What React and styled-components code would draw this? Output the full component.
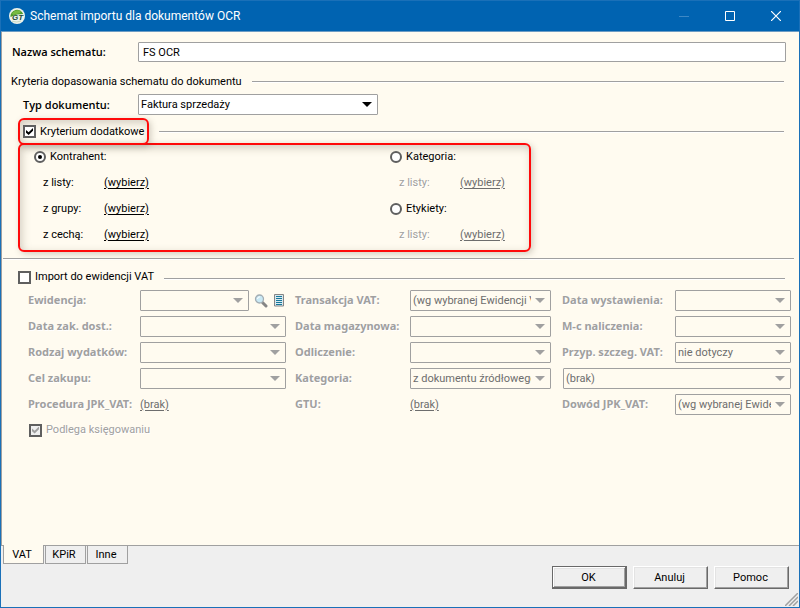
import React, { useState } from 'react';
import styled, { createGlobalStyle } from 'styled-components';

const GlobalStyle = createGlobalStyle`
	* {
		box-sizing: border-box;
	}

	body {
		margin: 0;
		background-color: #fffbf0;
		color: #000;
		font-family: Roboto, 'Open Sans', sans-serif;
		font-size: 11px;
		line-height: 16px;
	}

	input,
	select,
	button {
		margin: 0;
		font: inherit;
		color: inherit;
	}
`;

const Window = styled.div`
	display: flex;
	flex-direction: column;
	min-height: 100vh;
	border: 1px solid #1a70b8;
`;

const TitleBar = styled.header`
	display: flex;
	align-items: center;
	height: 31px;
	padding-left: 8px;
	background-color: #0063b1;
	border-bottom: 1px solid #6c9cc4;
	color: #fff;
`;

const Title = styled.h1`
	flex: 1;
	margin: 0 0 0 5px;
	font-size: 12px;
	font-weight: 400;
`;

const CaptionButton = styled.button`
	display: flex;
	align-items: center;
	justify-content: center;
	width: 46px;
	height: 29px;
	padding: 0;
	border: 0;
	background-color: transparent;
`;

const Page = styled.main`
	flex: 1;
	padding-top: 10px;
	border-left: 1px solid #a0a0a0;
	border-bottom: 1px solid #a0a0a0;
`;

const Row = styled.div`
	display: flex;
	align-items: center;
	padding: 0 13px 0 ${(props) => props.$indent || 10}px;
`;

const LegendRow = styled.div`
	display: flex;
	align-items: center;
	padding: 12px 15px 4px 9px;
`;

const ToggleRow = styled.div`
	display: flex;
	align-items: center;
	margin-top: 3px;
	padding: 0 15px 0 16px;
`;

const ImportRow = styled.div`
	display: flex;
	align-items: center;
	padding: 9px 14px 1px 16px;
`;

const FieldLabel = styled.label`
	width: ${(props) => props.$width}px;
	font-family: 'Open Sans', sans-serif;
	font-weight: 600;
`;

const TextInput = styled.input`
	flex: 1;
	min-width: 0;
	height: 20px;
	padding: 0 4px;
	border: 1px solid #a0a0a0;
	border-radius: 1px;
	background-color: #fff;
`;

const Legend = styled.h2`
	margin: 0;
	font-size: 11px;
	font-weight: 400;
`;

const Rule = styled.div`
	flex: 1;
	height: 2px;
	margin: ${(props) => (props.$low ? 4 : 0)}px 0 0 ${(props) => props.$gap}px;
	background-color: #a0a0a0;
	border-bottom: 1px solid #fff;
`;

const Divider = styled.hr`
	height: 2px;
	margin: 6px 5px 0 1px;
	border: 0;
	border-bottom: 1px solid #fff;
	background-color: #a0a0a0;
`;

const SelectBox = styled.div`
	position: relative;
	width: ${(props) => props.$width || '100%'};
	min-width: 0;
	color: ${(props) => (props.$disabled ? '#a0a0a0' : '#000')};

	svg {
		position: absolute;
		top: 8px;
		right: 6px;
		pointer-events: none;
	}
`;

const StyledSelect = styled.select`
	display: block;
	appearance: none;
	width: 100%;
	height: 21px;
	padding: 1px 19px 0 2px;
	border: 1px solid #a0a0a0;
	border-radius: 1px;
	background-color: #fff;
	color: #000;

	&:disabled {
		background-color: transparent;
		color: #6d6d6d;
		opacity: 1;
	}
`;

const CheckLabel = styled.label`
	display: inline-flex;
	align-items: center;
	gap: 4px;
	color: ${(props) => (props.$disabled ? '#a0a0a0' : '#000')};
	text-shadow: ${(props) => (props.$disabled ? '1px 1px #fff' : 'none')};
`;

const CheckInput = styled.input`
	appearance: none;
	display: flex;
	width: 13px;
	height: 13px;
	border: 2px solid #5f5f5f;
	background-color: #fff;

	&:checked::before {
		content: '';
		width: 7px;
		height: 7px;
		margin: 1px;
		background-color: ${(props) => (props.disabled ? '#a0a0a0' : '#000')};
		clip-path: polygon(0 30%, 38% 62%, 100% 0, 100% 38%, 38% 100%, 0 68%);
	}

	&:disabled {
		background-color: #efefef;
	}
`;

const RadioInput = styled.input`
	appearance: none;
	display: flex;
	align-items: center;
	justify-content: center;
	width: 12px;
	height: 12px;
	border: 2px solid #5f5f5f;
	border-radius: 50%;
	background-color: #fff;

	&:checked::before {
		content: '';
		width: 4px;
		height: 4px;
		border-radius: 50%;
		background-color: #000;
	}
`;

const Highlight = styled.div`
	border: 2px solid #ff0a0a;
	border-radius: 6px;
	box-shadow: 2px 2px 6px rgba(80, 70, 50, 0.25), inset 2px 3px 8px rgba(80, 70, 50, 0.25);
`;

const ToggleHighlight = styled(Highlight)`
	display: flex;
	align-items: center;
	height: 27px;
	padding: 0 3px 0 3px;
`;

const CriteriaHighlight = styled(Highlight)`
	display: flex;
	width: 64%;
	min-width: 513px;
	height: 109px;
	margin: -2px 0 0 16px;
	padding-left: 14px;
`;

const CriteriaColumn = styled.div`
	width: ${(props) => props.$width}px;
	margin-top: -1px;
`;

const CriteriaRow = styled.div`
	display: flex;
	align-items: center;
	height: 26px;
	padding-left: ${(props) => props.$indent || 0}px;
`;

const CriteriaName = styled.span`
	width: 61px;
	color: ${(props) => (props.$disabled ? '#a0a0a0' : '#000')};
	text-shadow: ${(props) => (props.$disabled ? '1px 1px #fff' : 'none')};
`;

const PickLink = styled.a`
	color: ${(props) => (props.$disabled ? '#6d6d6d' : '#000')};
	text-decoration: underline;
	text-underline-offset: 2px;
`;

const VatGrid = styled.div`
	display: grid;
	grid-template-columns:
		112px minmax(0, 146fr) 124px minmax(0, 141fr)
		124px minmax(0, 116fr);
	grid-auto-rows: 26px;
	align-items: start;
	padding: 4px 8px 0 26px;
`;

const VatLabel = styled.label`
	padding: 2px 0 0 ${(props) => props.$indent || 0}px;
	color: #a0a0a0;
	font-family: 'Noto Sans', sans-serif;
	font-weight: 700;
	text-shadow: 1px 1px #fff;
	white-space: nowrap;
`;

const VatValue = styled.div`
	display: flex;
	align-items: center;
	height: 21px;
	min-width: 0;
`;

const WideValue = styled.div`
	grid-column: span 2;
	padding-left: 12px;
`;

const PostingRow = styled.div`
	padding: 2px 0 0 27px;
`;

const IconButton = styled.button`
	display: flex;
	flex: none;
	margin: 0 1px 0 5px;
	padding: 0;
	border: 0;
	background-color: transparent;
`;

const Footer = styled.footer`
	position: relative;
	display: flex;
	justify-content: space-between;
	height: 61px;
	padding: 0 10px 0 2px;
	background-color: #efefef;
`;

const TabList = styled.div`
	display: flex;
	gap: 1px;
	height: 18px;
`;

const Tab = styled.button`
	width: 41px;
	height: ${(props) => (props.$active ? 19 : 18)}px;
	margin-top: ${(props) => (props.$active ? -1 : 0)}px;
	padding: ${(props) => (props.$active ? 1 : 0)}px 3px 0 0;
	border: 1px solid #a0a0a0;
	border-top: 0;
	background-color: ${(props) => (props.$active ? '#fffbf0' : '#efefef')};
`;

const Actions = styled.div`
	display: flex;
	gap: 6px;
	padding-top: 20px;
`;

const ActionButton = styled.button`
	width: 75px;
	height: 23px;
	padding: 0 2px 0 0;
	border: 1px solid;
	border-color: ${(props) => (props.$primary ? '#696969' : '#fff #696969 #696969 #fff')};
	background-color: #efefef;
	box-shadow: ${(props) =>
		props.$primary
			? 'inset -1px -1px #696969, inset 1px 1px #fff, inset -2px -2px #a0a0a0, inset 2px 2px #e3e3e3'
			: 'inset -1px -1px #a0a0a0, inset 1px 1px #e3e3e3'};
`;

const Grip = styled.svg`
	position: absolute;
	right: 1px;
	bottom: 1px;
`;

const Logo = () => (
	<svg width="16" height="16" viewBox="0 0 16 16" aria-hidden="true">
		<circle cx="8" cy="8" r="8" fill="#eef3ec" />
		<path d="M1.5 9A6.6 6.6 0 0 1 14.2 6L8 6.5 4 8z" fill="#4e9c2b" />
		<path d="M3 5Q7 1 12 3L11 5 4 7z" fill="#78ba43" />
		<text x="3" y="12" fill="#214c38" fontFamily="Liberation Sans" fontSize="8" fontStyle="italic" fontWeight="700">
			GT
		</text>
		<path d="M3 13.2Q8 15 12 13" stroke="#c5d8c3" fill="none" />
	</svg>
);

const SearchIcon = () => (
	<svg width="14" height="14" viewBox="0 0 14 14" aria-hidden="true">
		<path d="M8.5 8.5L12 12" stroke="#858585" strokeWidth="3" strokeLinecap="round" />
		<circle cx="5.5" cy="5" r="4" fill="#c9e9f5" stroke="#a3adb3" strokeWidth="1.3" />
		<path d="M3.5 5Q3.5 3 6 2.8" stroke="#fff" fill="none" />
	</svg>
);

const ListIcon = () => (
	<svg width="11" height="13" viewBox="0 0 11 13" aria-hidden="true">
		<path d="M.5.5h9v11.5h-9z" fill="#d8e8ee" stroke="#858585" />
		<path d="M2 2.5h6M2 4.5h6M2 6.5h6M2 8.5h6M2 10.5h6" stroke="#16789b" />
	</svg>
);

const Select = ({ id, label, value = '', disabled, width }) => (
	<SelectBox $disabled={disabled} $width={width}>
		<StyledSelect id={id} aria-label={label} defaultValue={value} disabled={disabled}>
			<option value={value}>{value}</option>
		</StyledSelect>
		<svg width="10" height="6" viewBox="0 0 10 6" aria-hidden="true">
			<path d="M0 0h10L5 5z" fill="currentColor" />
		</svg>
	</SelectBox>
);

const VatSelect = ({ id, name, value, indent }) => (
	<>
		<VatLabel htmlFor={id} $indent={indent}>
			{name}
		</VatLabel>
		<Select id={id} value={value} disabled />
	</>
);

const VatLink = ({ id, name, indent }) => (
	<>
		<VatLabel as="span" id={id} $indent={indent}>
			{name}
		</VatLabel>
		<VatValue>
			<PickLink href="#" $disabled aria-describedby={id}>
				(brak)
			</PickLink>
		</VatValue>
	</>
);

const Criteria = ({ name, disabled }) => (
	<CriteriaRow $indent={9}>
		<CriteriaName $disabled={disabled}>{name}</CriteriaName>
		<PickLink href="#" $disabled={disabled}>
			(wybierz)
		</PickLink>
	</CriteriaRow>
);

const tabs = ['VAT', 'KPiR', 'Inne'];

const App = () => {
	const [criterion, setCriterion] = useState('kontrahent');
	const [activeTab, setActiveTab] = useState('VAT');

	const radio = (value, text) => (
		<CriteriaRow>
			<CheckLabel>
				<RadioInput
					type="radio"
					name="criterion"
					checked={criterion === value}
					onChange={() => setCriterion(value)}
				/>
				{text}
			</CheckLabel>
		</CriteriaRow>
	);

	return (
		<>
			<GlobalStyle />
			<Window>
				<TitleBar>
					<Logo />
					<Title>Schemat importu dla dokumentów OCR</Title>
					<CaptionButton aria-label="Minimalizuj" disabled>
						<svg width="10" height="10">
							<path d="M0 5.5h10" stroke="#3d88c5" />
						</svg>
					</CaptionButton>
					<CaptionButton aria-label="Maksymalizuj">
						<svg width="10" height="10">
							<path d="M.5.5h9v9h-9z" stroke="#fff" fill="none" />
						</svg>
					</CaptionButton>
					<CaptionButton aria-label="Zamknij">
						<svg width="10" height="10">
							<path d="M0 0l10 10M10 0L0 10" stroke="#fff" strokeWidth="1.2" />
						</svg>
					</CaptionButton>
				</TitleBar>
				<Page>
					<Row>
						<FieldLabel htmlFor="name" $width={126}>
							Nazwa schematu:
						</FieldLabel>
						<TextInput id="name" defaultValue="FS OCR" />
					</Row>
					<LegendRow>
						<Legend>Kryteria dopasowania schematu do dokumentu</Legend>
						<Rule $gap={10} />
					</LegendRow>
					<Row $indent={21}>
						<FieldLabel htmlFor="type" $width={115}>
							Typ dokumentu:
						</FieldLabel>
						<Select id="type" value="Faktura sprzedaży" width="240px" />
					</Row>
					<ToggleRow>
						<ToggleHighlight>
							<CheckLabel>
								<CheckInput type="checkbox" defaultChecked />
								Kryterium dodatkowe
							</CheckLabel>
						</ToggleHighlight>
						<Rule $gap={10} />
					</ToggleRow>
					<CriteriaHighlight>
						<CriteriaColumn $width={356}>
							{radio('kontrahent', 'Kontrahent:')}
							<Criteria name="z listy:" />
							<Criteria name="z grupy:" />
							<Criteria name="z cechą:" />
						</CriteriaColumn>
						<CriteriaColumn $width={130}>
							{radio('kategoria', 'Kategoria:')}
							<Criteria name="z listy:" disabled />
							{radio('etykiety', 'Etykiety:')}
							<Criteria name="z listy:" disabled />
						</CriteriaColumn>
					</CriteriaHighlight>
					<Divider />
					<ImportRow>
						<CheckLabel>
							<CheckInput type="checkbox" />
							Import do ewidencji VAT
						</CheckLabel>
						<Rule $gap={10} $low />
					</ImportRow>
					<VatGrid>
						<VatLabel htmlFor="register">Ewidencja:</VatLabel>
						<VatValue>
							<Select id="register" disabled />
							<IconButton aria-label="Szukaj">
								<SearchIcon />
							</IconButton>
							<IconButton aria-label="Lista">
								<ListIcon />
							</IconButton>
						</VatValue>
						<VatSelect id="transaction" name="Transakcja VAT:" value="(wg wybranej Ewidencji VAT)" indent={9} />
						<VatSelect id="issued" name="Data wystawienia:" indent={11} />
						<VatSelect id="purchased" name="Data zak. dost.:" />
						<VatSelect id="stock" name="Data magazynowa:" indent={9} />
						<VatSelect id="month" name="M-c naliczenia:" indent={11} />
						<VatSelect id="expense" name="Rodzaj wydatków:" />
						<VatSelect id="deduction" name="Odliczenie:" indent={9} />
						<VatSelect id="special" name="Przyp. szczeg. VAT:" value="nie dotyczy" indent={11} />
						<VatSelect id="purpose" name="Cel zakupu:" />
						<VatSelect id="category" name="Kategoria:" value="z dokumentu źródłowego" indent={9} />
						<WideValue>
							<Select label="Podkategoria" value="(brak)" disabled />
						</WideValue>
						<VatLink id="procedure" name="Procedura JPK_VAT:" />
						<VatLink id="gtu" name="GTU:" indent={9} />
						<VatSelect id="proof" name="Dowód JPK_VAT:" value="(wg wybranej Ewidencji VAT)" indent={11} />
					</VatGrid>
					<PostingRow>
						<CheckLabel $disabled>
							<CheckInput type="checkbox" defaultChecked disabled />
							Podlega księgowaniu
						</CheckLabel>
					</PostingRow>
				</Page>
				<Footer>
					<TabList role="tablist">
						{tabs.map((tab) => (
							<Tab
								key={tab}
								role="tab"
								aria-selected={tab === activeTab}
								$active={tab === activeTab}
								onClick={() => setActiveTab(tab)}>
								{tab}
							</Tab>
						))}
					</TabList>
					<Actions>
						<ActionButton $primary>OK</ActionButton>
						<ActionButton>Anuluj</ActionButton>
						<ActionButton>Pomoc</ActionButton>
					</Actions>
					<Grip width="13" height="13" aria-hidden="true">
						<path d="M0 13L13 0M4 13L13 4M8 13L13 8" stroke="#a0a0a0" strokeWidth="1.5" />
					</Grip>
				</Footer>
			</Window>
		</>
	);
};

export default App;
